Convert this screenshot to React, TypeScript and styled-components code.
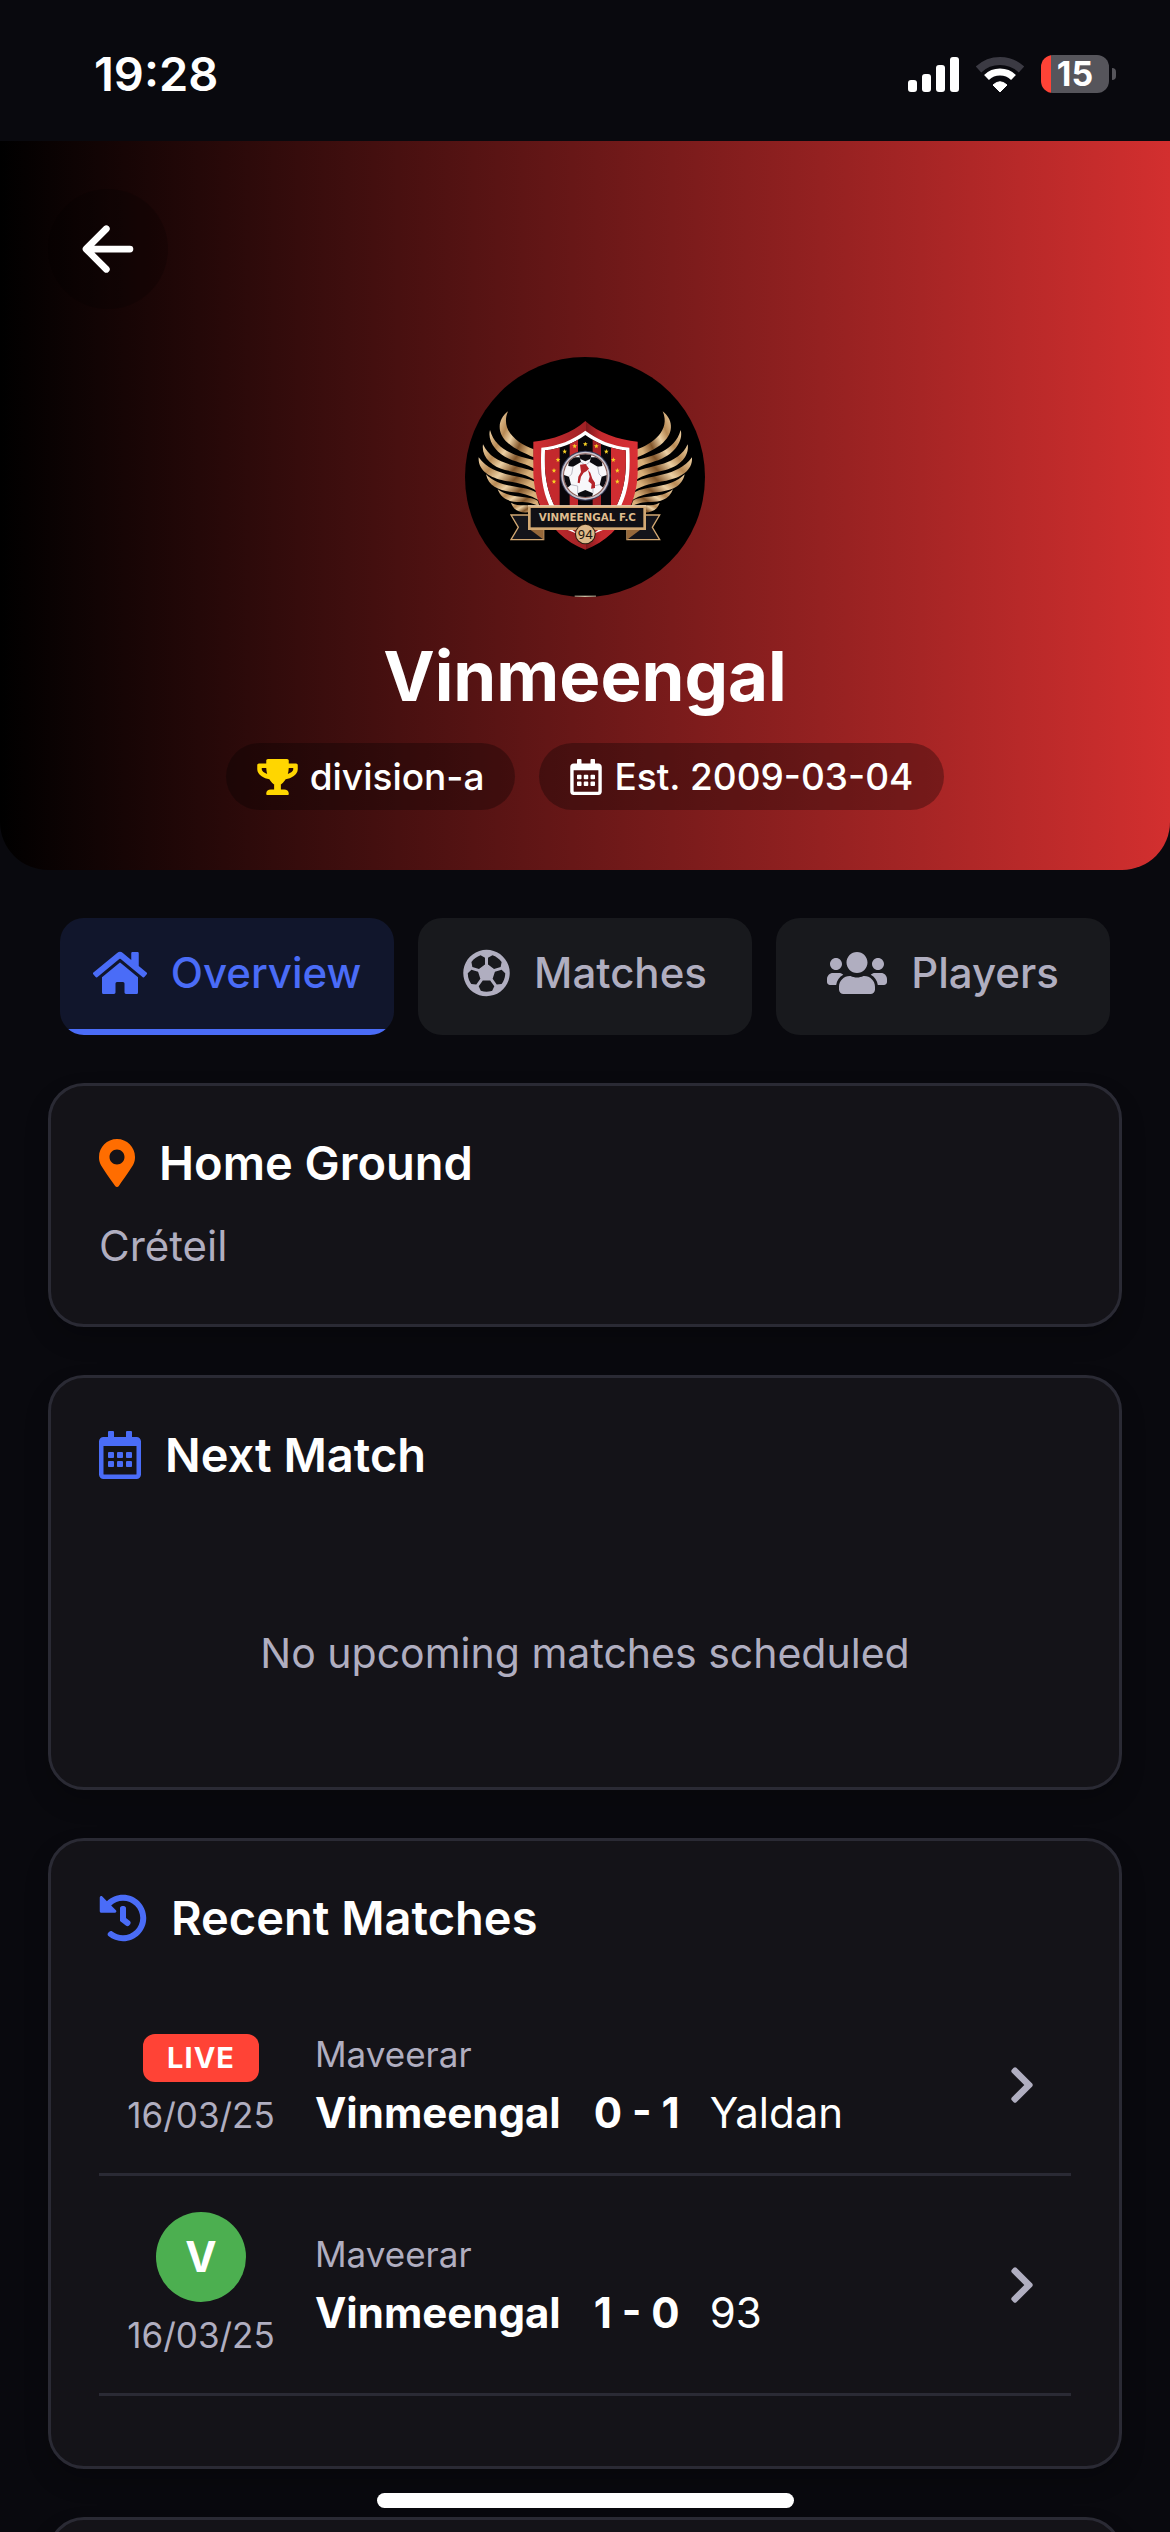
import React, { useState } from "react";
import styled, { createGlobalStyle } from "styled-components";
import {
  FaChevronRight,
  FaHistory,
  FaHome,
  FaMapMarkerAlt,
  FaRegCalendarAlt,
  FaRegFutbol,
  FaTrophy,
  FaUsers,
} from "react-icons/fa";
import { IoArrowBack } from "react-icons/io5";

const color = {
  page: "#09090e",
  card: "#141318",
  line: "#2a2a34",
  text: "#ffffff",
  muted: "#b0aec0",
  blue: "#4a6cf7",
  orange: "#ff6d00",
  gold: "#ffd600",
  live: "#ff4336",
  win: "#4caf50",
};

const GlobalStyle = createGlobalStyle`
  * { box-sizing: border-box; }
  body {
    margin: 0;
    background: ${color.page};
    color: ${color.text};
    font-family: Inter, "Noto Sans", sans-serif;
    -webkit-font-smoothing: antialiased;
  }
  h1, h2, p { margin: 0; }
  button { font: inherit; border: 0; cursor: pointer; }
  a { color: inherit; text-decoration: none; }
`;

const Screen = styled.div`
  height: 100vh;
  overflow: hidden;
  display: flex;
  flex-direction: column;
`;

/* The icons share a height per context; each keeps its own width. */
const Glyph = styled.span<{ $w: number; $h?: number; $color?: string }>`
  flex: none;
  display: block;
  width: ${(p) => p.$w}px;
  height: ${(p) => p.$h ?? 48}px;
  color: ${(p) => p.$color ?? "inherit"};

  svg {
    display: block;
    width: 100%;
    height: 100%;
  }
`;

/* ---------- status bar ---------- */

const StatusBar = styled.div`
  flex: none;
  display: flex;
  align-items: center;
  justify-content: space-between;
  height: 141px;
  padding: 6px 54px 0 94px;
`;

const Clock = styled.time`
  font-size: 47px;
  line-height: 58px;
  font-weight: 600;
`;

const StatusIcons = styled.div`
  display: flex;
  align-items: center;
  gap: 17px;
`;

const Battery = styled.div`
  display: flex;
  align-items: center;
  gap: 3px;
`;

const BatteryBody = styled.div`
  display: flex;
  align-items: center;
  justify-content: center;
  width: 68px;
  height: 38px;
  border-radius: 12px;
  background: linear-gradient(90deg, #ff4336 15%, #56555b 15%);
  font-size: 34px;
  line-height: 38px;
  font-weight: 700;
`;

const BatteryCap = styled.div`
  width: 4px;
  height: 12px;
  border-radius: 0 6px 6px 0;
  background: #56555b;
`;

/* ---------- team header ---------- */

const Hero = styled.header`
  flex: none;
  display: flex;
  flex-direction: column;
  padding: 48px 48px 60px;
  border-radius: 0 0 48px 48px;
  background: linear-gradient(90deg, #000000, #d32f2f);
`;

const BackButton = styled.button`
  display: grid;
  place-items: center;
  width: 120px;
  height: 120px;
  padding: 0;
  border-radius: 50%;
  background: rgba(0, 0, 0, 0.2);
  color: ${color.text};
`;

const Team = styled.div`
  display: flex;
  flex-direction: column;
  align-items: center;
  margin-top: 48px;
`;

const Crest = styled.svg`
  width: 240px;
  height: 240px;
  border-radius: 50%;
  background: #000000;
`;

const TeamName = styled.h1`
  margin-top: 36px;
  font-size: 69px;
  line-height: 86px;
  font-weight: 700;
`;

const Pills = styled.div`
  display: flex;
  gap: 24px;
  margin-top: 24px;
`;

const Pill = styled.span`
  display: flex;
  align-items: center;
  gap: 12px;
  padding: 12px 31px;
  border-radius: 36px;
  background: rgba(0, 0, 0, 0.3);
  font-size: 37px;
  line-height: 43px;
  font-weight: 500;
`;

/* ---------- tabs ---------- */

const Tabs = styled.nav`
  flex: none;
  display: flex;
  gap: 24px;
  padding: 48px 60px;
`;

const Tab = styled.button<{ $active: boolean }>`
  flex: 1 1 0;
  display: flex;
  align-items: center;
  justify-content: center;
  gap: 24px;
  height: 117px;
  padding: 0 0 8px;
  border-radius: 24px;
  background: ${(p) =>
    p.$active
      ? `linear-gradient(0deg, ${color.blue} 6px, #11162c 6px)`
      : "#18191d"};
  color: ${(p) => (p.$active ? color.blue : color.muted)};
  font-size: 42px;
  line-height: 50px;
  font-weight: 500;
`;

/* ---------- cards ---------- */

const Content = styled.main`
  flex: none;
  display: flex;
  flex-direction: column;
  gap: 48px;
  padding: 0 48px;
`;

const Card = styled.section`
  padding: 48px;
  border: 3px solid ${color.line};
  border-radius: 36px;
  background: ${color.card};
  box-shadow: 0 12px 24px rgba(0, 0, 0, 0.2);
`;

const CardTitle = styled.h2`
  display: flex;
  align-items: center;
  gap: 24px;
  font-size: 47px;
  line-height: 58px;
  font-weight: 600;
`;

const Place = styled.p`
  margin-top: 24px;
  color: ${color.muted};
  font-size: 42px;
  line-height: 60px;
`;

const Empty = styled.p`
  padding: 142px 0 58px;
  color: ${color.muted};
  font-size: 41px;
  line-height: 55px;
  text-align: center;
`;

const MatchList = styled.div`
  margin: 50px 0 22px;
`;

const MatchRow = styled.a`
  display: flex;
  align-items: center;
  gap: 36px;
  padding: 36px 36px 36px 24px;
  border-bottom: 3px solid ${color.line};
  color: ${color.text};
`;

const MatchState = styled.div`
  flex: none;
  display: flex;
  flex-direction: column;
  align-items: center;
  gap: 12px;
  width: 156px;
`;

const LiveBadge = styled.span`
  padding: 0 24px;
  border-radius: 12px;
  background: ${color.live};
  font-size: 29px;
  line-height: 48px;
  font-weight: 700;
  letter-spacing: 1px;
`;

const ResultBadge = styled.span`
  width: 90px;
  border-radius: 50%;
  background: ${color.win};
  font-size: 42px;
  line-height: 90px;
  font-weight: 700;
  text-align: center;
`;

const Small = styled.span`
  color: ${color.muted};
  font-size: 35px;
  line-height: 43px;
`;

const MatchInfo = styled.div`
  flex: 1;
  display: flex;
  flex-direction: column;
  gap: 12px;
`;

const Score = styled.div`
  display: flex;
  font-size: 42px;
  line-height: 49px;

  strong {
    font-weight: 700;
  }
`;

const Result = styled.strong`
  min-width: 92px;
  margin: 0 24px 0 33px;
`;

const NextCard = styled(Card)`
  min-height: 240px;
`;

const HomeIndicator = styled.div`
  position: fixed;
  bottom: 24px;
  left: 50%;
  width: 417px;
  height: 15px;
  margin-left: -208px;
  border-radius: 8px;
  background: #ffffff;
`;

/* ---------- drawings ---------- */

function Signal() {
  return (
    <svg width="51" height="36" viewBox="0 0 51 36" fill="#fff" aria-hidden="true">
      <rect x="0" y="24" width="9" height="12" rx="3" />
      <rect x="14" y="18" width="9" height="18" rx="3" />
      <rect x="28" y="9" width="9" height="27" rx="3" />
      <rect x="42" y="1" width="9" height="35" rx="3" />
    </svg>
  );
}

function Wifi() {
  return (
    <svg width="48" height="36" viewBox="0 0 48 36" fill="none" aria-hidden="true">
      <path d="M2.5 13.5A31.5 31.5 0 0 1 45.5 13.5" stroke="#3b3a43" strokeWidth="8" />
      <path d="M10.5 21.5A19.5 19.5 0 0 1 37.5 21.5" stroke="#fff" strokeWidth="7" />
      <path d="M24 36L17 29Q24 22.5 31 29Z" fill="#fff" stroke="#fff" strokeLinejoin="round" />
    </svg>
  );
}

const feathers = [
  "M205 214C176 236 168 276 204 308C226 328 256 340 282 352L282 328C236 312 180 272 205 214Z",
  "M151 270C142 302 170 340 208 356C236 368 262 372 284 386L282 360C236 348 168 334 151 270Z",
  "M130 313C124 350 156 380 196 390C232 398 262 404 286 420L284 394C240 376 158 376 130 313Z",
  "M117 352C114 392 152 414 194 422C234 428 266 436 290 452L287 426C246 404 160 412 117 352Z",
  "M139 403C146 440 180 452 216 456C246 458 272 466 296 480L291 458C250 434 184 448 139 403Z",
  "M174 448C186 480 214 486 240 486C264 486 282 490 300 500L294 482C266 464 214 478 174 448Z",
  "M214 488C222 514 244 520 272 516L290 500C264 490 240 502 214 488Z",
];

const stars = [
  [437, 312], [405, 318], [470, 318], [375, 334], [500, 334],
  [355, 359], [521, 359], [343, 391], [533, 391], [343, 424], [533, 424],
];

function Wing() {
  return (
    <g>
      {feathers.map((d) => (
        <path key={d} d={d} fill="url(#gold)" />
      ))}
      <path d="M214 525H280V570L312 570V599H214L236 562Z" fill="#14141a" stroke="#d2a873" strokeWidth="4" />
      <path d="M268 566L312 599V566Z" fill="#96683a" />
    </g>
  );
}

function TeamCrest() {
  return (
    <Crest viewBox="76 51 720 720" role="img" aria-label="Vinmeengal F.C">
      <defs>
        <linearGradient id="gold" x1="0" y1="0" x2="1" y2="0.6">
          <stop offset="0" stopColor="#f0d3a6" />
          <stop offset="0.3" stopColor="#b88a55" />
          <stop offset="0.5" stopColor="#ecd0a4" />
          <stop offset="0.75" stopColor="#83572c" />
          <stop offset="1" stopColor="#d9b07a" />
        </linearGradient>
        <linearGradient id="red" x1="0" y1="0" x2="1" y2="0">
          <stop offset="0" stopColor="#d22f33" />
          <stop offset="0.5" stopColor="#a02125" />
          <stop offset="0.5" stopColor="#7c181b" />
          <stop offset="0.65" stopColor="#c62a2e" />
          <stop offset="1" stopColor="#d93035" />
        </linearGradient>
        <clipPath id="field">
          <path d="M437 285C402 310 360 327 316 331C312 400 322 455 348 505H527C553 455 562 400 558 331C514 327 472 310 437 285Z" />
        </clipPath>
        <clipPath id="ball">
          <circle cx="437" cy="407" r="64" />
        </clipPath>
      </defs>

      <Wing />
      <g transform="translate(874 0) scale(-1 1)">
        <Wing />
      </g>

      <path d="M437 243C398 278 340 300 281 305V400C284 505 344 594 437 629C530 594 591 505 594 400V305C535 300 476 278 437 243Z" fill="url(#red)" />
      <path d="M437 272C400 300 356 318 305 323C300 420 312 480 352 535H522C562 480 574 420 569 323C518 318 474 300 437 272Z" fill="#fff" />
      <path d="M375 566L398 570L414 582ZM499 566L476 570L460 582Z" fill="#fff" />
      <g clipPath="url(#field)">
        <rect x="300" y="270" width="274" height="240" fill="#08060a" />
        <rect x="300" y="270" width="60" height="240" fill="#c4292d" />
        <rect x="390" y="270" width="25" height="240" fill="#c4292d" />
        <rect x="459" y="270" width="25" height="240" fill="#a82226" />
        <rect x="514" y="270" width="60" height="240" fill="#cf2d31" />
      </g>
      {stars.map(([x, y]) => (
        <path
          key={`${x}-${y}`}
          transform={`translate(${x} ${y})`}
          d="M0 -7L2 -2L7 -2L3 2L4 7L0 4L-4 7L-3 2L-7 -2L-2 -2Z"
          fill="#f7cf24"
        />
      ))}

      <circle cx="437" cy="407" r="75" fill="#3a3f5c" />
      <circle cx="437" cy="407" r="72" fill="#c9c6cf" />
      <circle cx="437" cy="407" r="67" fill="#8b5a52" />
      <circle cx="437" cy="407" r="64" fill="#f7f7fa" />
      <g clipPath="url(#ball)" fill="#0b0b10">
        <path d="M417 340H457L452 357L437 364L422 357Z" />
        <path d="M388 352L420 352L424 366L400 380L386 378Z" />
        <path d="M486 352L454 352L450 366L474 380L488 378Z" />
        <path d="M370 404L388 410L394 434L380 446L368 440Z" />
        <path d="M504 404L486 410L480 434L494 446L506 440Z" />
        <path d="M414 460L437 450L460 460L456 476H418Z" />
      </g>
      <path
        d="M424 366L437 376L450 366M400 380L396 402L388 410M474 380L478 402L486 410M394 434L414 438V460M480 434L460 438V460"
        fill="none"
        stroke="#b9b9c4"
        strokeWidth="3"
      />
      <path d="M421 374L438 372L448 386L440 394L432 398L424 410L420 430L414 428L416 410L424 396Z" fill="#b5252b" />
      <path d="M445 390L452 398L458 416L466 428V444L454 446L456 432L446 424L450 410Z" fill="#b5252b" />

      <rect x="269" y="500" width="346" height="66" fill="#101015" stroke="#d2a873" strokeWidth="8" />
      <rect x="265" y="496" width="354" height="3" fill="#f1dcc0" />
      <text
        x="443"
        y="543"
        textAnchor="middle"
        fontFamily="DejaVu Sans, sans-serif"
        fontSize="31"
        fontWeight="700"
        fill="#dfbd8e"
      >
        VINMEENGAL F.C
      </text>
      <circle cx="437" cy="582" r="31" fill="#2a1c10" />
      <circle cx="437" cy="582" r="28" fill="#dcb98a" />
      <text
        x="437"
        y="597"
        textAnchor="middle"
        fontFamily="Roboto, sans-serif"
        fontSize="40"
        fill="#1d140c"
      >
        94
      </text>
      <rect x="405" y="767" width="64" height="5" fill="#c9b9a0" />
    </Crest>
  );
}

/* ---------- data ---------- */

const tabs = [
  { id: "overview", label: "Overview", Icon: FaHome, width: 54 },
  { id: "matches", label: "Matches", Icon: FaRegFutbol, width: 47 },
  { id: "players", label: "Players", Icon: FaUsers, width: 60 },
];

const matches = [
  { live: true, date: "16/03/25", cup: "Maveerar", home: "Vinmeengal", score: "0 - 1", away: "Yaldan" },
  { live: false, date: "16/03/25", cup: "Maveerar", home: "Vinmeengal", score: "1 - 0", away: "93" },
];

export default function App() {
  const [active, setActive] = useState("overview");

  return (
    <Screen>
      <GlobalStyle />
      <StatusBar>
        <Clock>19:28</Clock>
        <StatusIcons>
          <Signal />
          <Wifi />
          <Battery>
            <BatteryBody>15</BatteryBody>
            <BatteryCap />
          </Battery>
        </StatusIcons>
      </StatusBar>

      <Hero>
        <BackButton type="button" aria-label="Back">
          <Glyph $w={72} $h={72}>
            <IoArrowBack />
          </Glyph>
        </BackButton>
        <Team>
          <TeamCrest />
          <TeamName>Vinmeengal</TeamName>
          <Pills>
            <Pill>
              <Glyph $w={41} $h={36} $color={color.gold}>
                <FaTrophy />
              </Glyph>
              division-a
            </Pill>
            <Pill>
              <Glyph $w={32} $h={36}>
                <FaRegCalendarAlt />
              </Glyph>
              Est. 2009-03-04
            </Pill>
          </Pills>
        </Team>
      </Hero>

      <Tabs>
        {tabs.map(({ id, label, Icon, width }) => (
          <Tab key={id} type="button" $active={id === active} onClick={() => setActive(id)}>
            <Glyph $w={width}>
              <Icon />
            </Glyph>
            {label}
          </Tab>
        ))}
      </Tabs>

      <Content>
        <Card>
          <CardTitle>
            <Glyph $w={36} $color={color.orange}>
              <FaMapMarkerAlt />
            </Glyph>
            Home Ground
          </CardTitle>
          <Place>Créteil</Place>
        </Card>

        <Card>
          <CardTitle>
            <Glyph $w={42} $color={color.blue}>
              <FaRegCalendarAlt />
            </Glyph>
            Next Match
          </CardTitle>
          <Empty>No upcoming matches scheduled</Empty>
        </Card>

        <Card>
          <CardTitle>
            <Glyph $w={48} $color={color.blue}>
              <FaHistory />
            </Glyph>
            Recent Matches
          </CardTitle>
          <MatchList>
            {matches.map((m) => (
              <MatchRow key={m.away} href="#">
                <MatchState>
                  {m.live ? <LiveBadge>LIVE</LiveBadge> : <ResultBadge>V</ResultBadge>}
                  <Small>{m.date}</Small>
                </MatchState>
                <MatchInfo>
                  <Small>{m.cup}</Small>
                  <Score>
                    <strong>{m.home}</strong>
                    <Result>{m.score}</Result>
                    <span>{m.away}</span>
                  </Score>
                </MatchInfo>
                <Glyph $w={26} $h={42} $color={color.muted}>
                  <FaChevronRight />
                </Glyph>
              </MatchRow>
            ))}
          </MatchList>
        </Card>

        <NextCard />
      </Content>

      <HomeIndicator />
    </Screen>
  );
}
